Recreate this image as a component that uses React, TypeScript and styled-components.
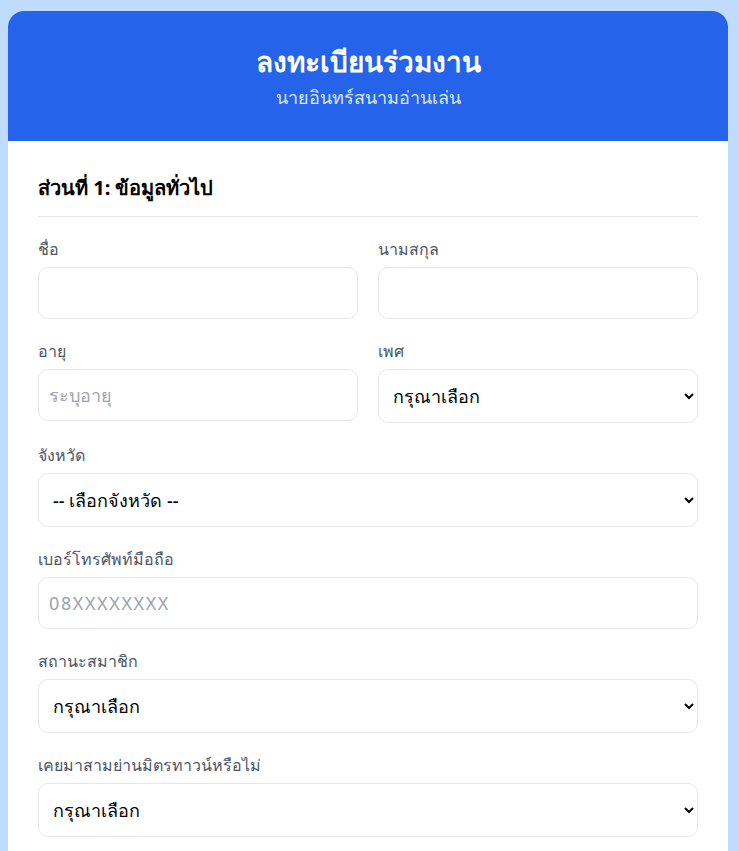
import React from "react";
import styled, { createGlobalStyle } from "styled-components";

const Global = createGlobalStyle`
  html, body { margin: 0; padding: 0; }
  body {
    background: #bfdbfe;
    font-family: "Noto Sans", "Open Sans", sans-serif;
    color: #111827;
  }
  * { box-sizing: border-box; }
`;

const Page = styled.div`
  padding: 11px 11px 40px 8px;
`;

const Card = styled.div`
  width: 720px;
  background: #ffffff;
  border-radius: 16px;
  overflow: hidden;
`;

const Header = styled.header`
  background: #2563eb;
  height: 130px;
  display: flex;
  flex-direction: column;
  align-items: center;
  justify-content: center;
  gap: 4px;
  color: #ffffff;
`;

const Title = styled.h1`
  margin: 0;
  font-size: 28px;
  font-weight: 700;
  line-height: 38px;
`;

const Subtitle = styled.p`
  margin: 0;
  font-size: 18px;
  line-height: 26px;
  color: #dbeafe;
`;

const Body = styled.div`
  padding: 30px 30px;
`;

const SectionTitle = styled.h2`
  margin: 0 0 20px;
  padding-bottom: 11px;
  border-bottom: 1px solid #e5e7eb;
  font-size: 20px;
  font-weight: 700;
  line-height: 34px;
  color: #000;
`;

const Row = styled.div`
  display: grid;
  grid-template-columns: 1fr 1fr;
  gap: 20px;
`;

const Field = styled.div`
  display: flex;
  flex-direction: column;
  margin-bottom: 20px;
`;

const Label = styled.label`
  font-size: 16px;
  line-height: 24px;
  color: #4b5563;
  margin-bottom: 6px;
`;

const Input = styled.input<{ $wide?: boolean }>`
  height: 52px;
  border: 1px solid #e5e7eb;
  border-radius: 10px;
  padding: 0 10px;
  font-family: "Noto Sans", sans-serif;
  font-size: 18px;
  letter-spacing: ${(p) => (p.$wide ? "1.6px" : "0")};
  color: #111827;
  background: #fff;
  outline: none;
  &::placeholder { color: #9ca3af; }
`;

const Select = styled.select`
  height: 54px;
  border: 1px solid #e5e7eb;
  border-radius: 10px;
  padding: 0 14px 0 10px;
  font-family: "Noto Sans", sans-serif;
  font-size: 18px;
  font-weight: 500;
  color: #000;
  background: #fff;
  outline: none;
`;

export default function App() {
  return (
    <>
      <Global />
      <Page>
        <Card>
          <Header>
            <Title>ลงทะเบียนร่วมงาน</Title>
            <Subtitle>นายอินทร์สนามอ่านเล่น</Subtitle>
          </Header>
          <Body>
            <SectionTitle>ส่วนที่ 1: ข้อมูลทั่วไป</SectionTitle>
            <Row>
              <Field>
                <Label>ชื่อ</Label>
                <Input type="text" />
              </Field>
              <Field>
                <Label>นามสกุล</Label>
                <Input type="text" />
              </Field>
            </Row>
            <Row>
              <Field>
                <Label>อายุ</Label>
                <Input type="number" placeholder="ระบุอายุ" />
              </Field>
              <Field>
                <Label>เพศ</Label>
                <Select defaultValue="">
                  <option value="">กรุณาเลือก</option>
                  <option value="m">ชาย</option>
                  <option value="f">หญิง</option>
                </Select>
              </Field>
            </Row>
            <Field>
              <Label>จังหวัด</Label>
              <Select defaultValue="">
                <option value="">-- เลือกจังหวัด --</option>
              </Select>
            </Field>
            <Field>
              <Label>เบอร์โทรศัพท์มือถือ</Label>
              <Input type="tel" placeholder="08XXXXXXXX" $wide />
            </Field>
            <Field>
              <Label>สถานะสมาชิก</Label>
              <Select defaultValue="">
                <option value="">กรุณาเลือก</option>
              </Select>
            </Field>
            <Field>
              <Label>เคยมาสามย่านมิตรทาวน์หรือไม่</Label>
              <Select defaultValue="">
                <option value="">กรุณาเลือก</option>
              </Select>
            </Field>
          </Body>
        </Card>
      </Page>
    </>
  );
}
